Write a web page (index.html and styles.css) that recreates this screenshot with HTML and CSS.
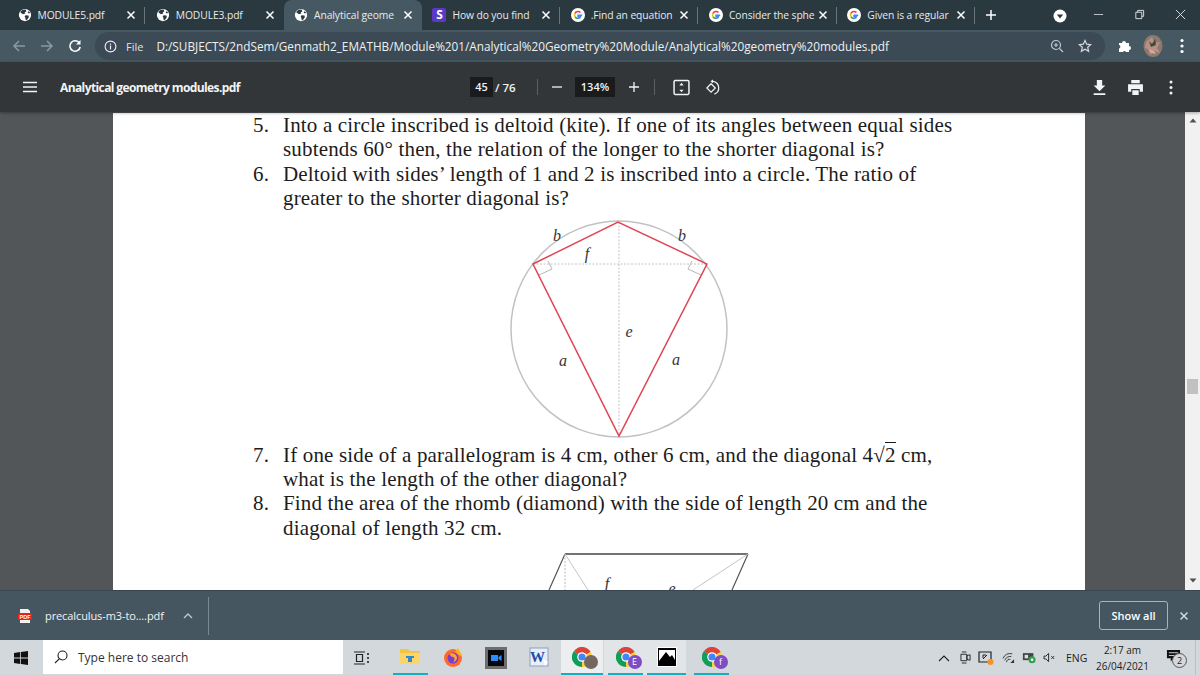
FILE: index.html
```html
<!DOCTYPE html>
<html lang="en">
<head>
<meta charset="utf-8">
<title>Analytical geometry modules.pdf</title>
<link rel="stylesheet" href="styles.css">
</head>
<body>
<svg class="defs" width="0" height="0">
  <symbol id="globe" viewBox="0 0 16 16">
    <circle cx="8" cy="8" r="7" fill="#fff"/>
    <path d="M5 2.200 8.600 1.600 9.600 3.600 7.600 5 8.400 6.400 5.600 7 3.400 5.400 2.400 4.600ZM8.600 8.200 12 8.600 12.400 10.600 10.400 13.400 8.800 14 8.400 11 7.600 9.600ZM12 3.600 14 5.400 12.400 6.200 11 5Z" fill="#2b3a42"/>
  </symbol>
  <symbol id="g" viewBox="0 0 16 16">
    <circle cx="8" cy="8" r="8" fill="#fff"/>
    <path d="M12.800 8.200H8.100v1.700h2.800c-.3 1.300-1.400 2.100-2.800 2.100" fill="none" stroke="#4285f4" stroke-width="1.700"/>
    <path d="M8.100 12A4 4 0 0 1 4.500 9.800" fill="none" stroke="#34a853" stroke-width="1.800"/>
    <path d="M4.500 9.800a4 4 0 0 1 0-3.600" fill="none" stroke="#fbbc05" stroke-width="1.800"/>
    <path d="M4.500 6.200A4 4 0 0 1 10.800 5.100" fill="none" stroke="#ea4335" stroke-width="1.800"/>
  </symbol>
  <symbol id="chrome" viewBox="0 0 20 20">
    <path d="M10 10 18.700 5A10 10 0 0 0 1.800 4.200Z" fill="#db4437"/>
    <path d="M10 10 1.800 4.200A10 10 0 0 0 10 20Z" fill="#0f9d58"/>
    <path d="M10 10 10 20A10 10 0 0 0 18.700 5Z" fill="#ffcd40"/>
    <circle cx="10" cy="10" r="4.800" fill="#fff"/>
    <circle cx="10" cy="10" r="3.600" fill="#4285f4"/>
  </symbol>
  <symbol id="x" viewBox="0 0 10 10">
    <path d="M1.500 1.500 8.500 8.500M8.500 1.500 1.500 8.500" fill="none" stroke="currentColor" stroke-width="1.500"/>
  </symbol>
</svg>

<header class="tabstrip">
  <div class="tab"><svg class="favicon"><use href="#globe"/></svg><span class="tab-title">MODULE5.pdf</span><svg class="tab-x"><use href="#x"/></svg></div>
  <div class="tab tab-plain"><svg class="favicon"><use href="#globe"/></svg><span class="tab-title">MODULE3.pdf</span><svg class="tab-x"><use href="#x"/></svg></div>
  <div class="tab tab-active tab-plain"><svg class="favicon"><use href="#globe"/></svg><span class="tab-title">Analytical geome</span><svg class="tab-x"><use href="#x"/></svg></div>
  <div class="tab"><span class="s-icon">S</span><span class="tab-title">How do you find</span><svg class="tab-x"><use href="#x"/></svg></div>
  <div class="tab"><svg class="favicon"><use href="#g"/></svg><span class="tab-title">.Find an equation</span><svg class="tab-x"><use href="#x"/></svg></div>
  <div class="tab"><svg class="favicon"><use href="#g"/></svg><span class="tab-title">Consider the sphe</span><svg class="tab-x"><use href="#x"/></svg></div>
  <div class="tab"><svg class="favicon"><use href="#g"/></svg><span class="tab-title">Given is a regular</span><svg class="tab-x"><use href="#x"/></svg></div>
  <svg class="new-tab" viewBox="0 0 12 12"><path d="M6 1v10M1 6h10" stroke="#fff" stroke-width="1.500"/></svg>
  <svg class="media-btn" viewBox="0 0 14 14"><circle cx="7" cy="7" r="6.500" fill="#fff"/><path d="M3.800 5.500h6.400L7 9.500Z" fill="#2b3a42"/></svg>
  <div class="win-controls">
    <svg viewBox="0 0 12 12"><path d="M1 6h10" stroke="#c9ced2" stroke-width="1"/></svg>
    <svg viewBox="0 0 12 12"><path d="M2 3.500h6.500V10.500H2ZM4 3.500V1.500h6.500V8H8.500" fill="none" stroke="#e4e7e9"/></svg>
    <svg viewBox="0 0 12 12"><path d="M1 1 11 11M11 1 1 11" stroke="#e4e7e9"/></svg>
  </div>
</header>

<nav class="toolbar">
  <svg class="nav-btn dim" viewBox="0 0 14 14"><path d="M13 7H2M7 2 2 7l5 5" fill="none" stroke="currentColor" stroke-width="1.500"/></svg>
  <svg class="nav-btn dim" viewBox="0 0 14 14"><path d="M1 7h11M7 2l5 5-5 5" fill="none" stroke="currentColor" stroke-width="1.500"/></svg>
  <svg class="nav-btn" viewBox="0 0 14 14"><path d="M11.500 4.200A5.200 5.200 0 1 0 12.200 8" fill="none" stroke="currentColor" stroke-width="1.600"/><path d="M12.500 1v4.500H8Z" fill="currentColor"/></svg>
  <div class="omnibox">
    <svg class="info" viewBox="0 0 14 14"><circle cx="7" cy="7" r="5.800" fill="none" stroke="#eef1f2" stroke-width="1.200"/><path d="M7 6v4.200M7 3.800v1.200" stroke="#eef1f2" stroke-width="1.300"/></svg>
    <span class="scheme">File</span>
    <span class="omni-sep"></span>
    <span class="url">D:/SUBJECTS/2ndSem/Genmath2_EMATHB/Module%201/Analytical%20Geometry%20Module/Analytical%20geometry%20modules.pdf</span>
    <svg class="omni-icon zoom-icon" viewBox="0 0 14 14"><circle cx="6" cy="6" r="4.500" fill="none" stroke="#c3c9cd" stroke-width="1.200"/><path d="M9.500 9.500 13 13M6 4v4M4 6h4" stroke="#c3c9cd" stroke-width="1.200"/></svg>
    <svg class="omni-icon" viewBox="0 0 14 14"><path d="M7 1.500 8.700 5.200l4 .4-3 2.700.9 4L7 10.300l-3.600 2 .9-4-3-2.700 4-.4Z" fill="none" stroke="#d7dbde" stroke-width="1.200"/></svg>
  </div>
  <svg class="puzzle" viewBox="0 0 14 14"><path d="M1 4h3a2 2 0 1 1 4 0h3v3a2 2 0 1 1 0 4v2H8a1.600 1.600 0 0 0-3 0H1V9.500a1.800 1.800 0 0 0 0-3.500Z" fill="#fff"/></svg>
  <svg class="avatar" viewBox="0 0 20 22"><ellipse cx="10" cy="11" rx="9.500" ry="11" fill="#8d7a6c"/><path d="M3 7 9 2l3 6 5-1-3 6 3 5-6-2-4 4-2-6-3-1Z" fill="#b98f86"/><path d="M6 6l3 3 3-5 1 6-5 2Z" fill="#3e4a3c"/><path d="M6 14l5 2 2 3-5-1Z" fill="#c9b0a4"/></svg>
  <svg class="kebab" viewBox="0 0 4 16"><circle cx="2" cy="2.500" r="1.600" fill="#fff"/><circle cx="2" cy="8" r="1.600" fill="#fff"/><circle cx="2" cy="13.500" r="1.600" fill="#fff"/></svg>
</nav>

<div class="pdfbar">
  <svg class="hamburger" viewBox="0 0 14 12"><path d="M0 1.500h14M0 6h14M0 10.500h14" stroke="#f1f3f4" stroke-width="1.300"/></svg>
  <span class="pdf-title">Analytical geometry modules.pdf</span>
  <span class="num-box page-box">45</span>
  <span class="page-total">/ 76</span>
  <span class="bar-sep sep-a"></span>
  <svg class="zoom-step minus" viewBox="0 0 12 12"><path d="M1 6h10" stroke="#f1f3f4" stroke-width="1.300"/></svg>
  <span class="num-box pct-box">134%</span>
  <svg class="zoom-step plus" viewBox="0 0 12 12"><path d="M6 1v10M1 6h10" stroke="#f1f3f4" stroke-width="1.300"/></svg>
  <span class="bar-sep sep-b"></span>
  <svg class="pdf-tool fit" viewBox="0 0 16 16"><rect x="1" y="1.500" width="14" height="13" rx="1" fill="none" stroke="#f1f3f4" stroke-width="1.400"/><path d="M8 3.500 10 6H6ZM8 12.500 6 10h4Z" fill="#f1f3f4"/></svg>
  <svg class="pdf-tool rotate" viewBox="0 0 18 18"><path d="M9 4.500 13.500 9 9 13.500 4.500 9Z" fill="none" stroke="#f1f3f4" stroke-width="1.300" transform="translate(-1.500 .5)"/><path d="M9.500 2.500a7 7 0 0 1 1.500 13.500" fill="none" stroke="#f1f3f4" stroke-width="1.300"/><path d="M9.500 .5v4L6.800 2.500Z" fill="#f1f3f4"/></svg>
  <svg class="pdf-tool download" viewBox="0 0 14 16"><path d="M4.500 1h5v5h3L7 11.500 1.500 6h3ZM1.500 13.500h11v1.500h-11Z" fill="#f1f3f4"/></svg>
  <svg class="pdf-tool print" viewBox="0 0 16 16"><path d="M4 1h8v3H4ZM1 5h14v7h-3v-2.500H4V12H1ZM5 10.500h6V15H5Z" fill="#f1f3f4"/></svg>
  <svg class="pdf-tool pdf-kebab" viewBox="0 0 4 16"><circle cx="2" cy="2.500" r="1.500" fill="#f1f3f4"/><circle cx="2" cy="8" r="1.500" fill="#f1f3f4"/><circle cx="2" cy="13.500" r="1.500" fill="#f1f3f4"/></svg>
</div>

<main class="viewer">
  <div class="viewer-main">
    <article class="page">
      <div class="problem"><span class="num">5.</span><div>Into a circle inscribed is deltoid (kite). If one of its angles between equal sides<br>subtends 60° then, the relation of the longer to the shorter diagonal is?</div></div>
      <div class="problem"><span class="num">6.</span><div>Deltoid with sides’ length of 1 and 2 is inscribed into a circle. The ratio of<br>greater to the shorter diagonal is?</div></div>
      <svg class="figure kite" viewBox="490 210 280 232">
        <circle cx="619" cy="328" r="108" fill="none" stroke="#c2c2c2" stroke-width="1.500"/>
        <path d="M533 263H707M619 221V435" stroke="#c4c4c4" stroke-dasharray="2 1.500" fill="none"/>
        <path d="M539 274 552 268 548 260M701 274 688 268 692 260" fill="none" stroke="#b8b8b8"/>
        <path d="M533 263 618 221 707 263 619 435Z" fill="none" stroke="#e04654" stroke-width="1.500"/>
        <g class="fig-label">
          <text x="557" y="240">b</text><text x="682" y="240">b</text>
          <text x="587" y="258">f</text><text x="629" y="336">e</text>
          <text x="563" y="365">a</text><text x="676" y="364">a</text>
        </g>
      </svg>
      <div class="problem"><span class="num">7.</span><div>If one side of a parallelogram is 4 cm, other 6 cm, and the diagonal 4<span class="radical">√<span class="radicand">2</span></span> cm,<br>what is the length of the other diagonal?</div></div>
      <div class="problem"><span class="num">8.</span><div>Find the area of the rhomb (diamond) with the side of length 20 cm and the<br>diagonal of length 32 cm.</div></div>
      <svg class="figure para" viewBox="500 545 300 45">
        <path d="M565 554H748" stroke="#444" stroke-width="1.500"/>
        <path d="M565 554 549 590M748 554 732 590" stroke="#555" stroke-width="1.200" fill="none"/>
        <path d="M565 554V590" stroke="#bbb" stroke-dasharray="2 1.500"/>
        <path d="M565 554 588 590M748 554 693 590" stroke="#c4c4c4"/>
        <g class="fig-label"><text x="607" y="589">f</text><text x="672" y="594">e</text></g>
      </svg>
    </article>
  </div>
  <div class="scrollbar">
    <svg class="arrow" viewBox="0 0 8 5"><path d="M4 .5 7.500 4.500H.5Z" fill="#505050"/></svg>
    <div class="thumb"></div>
    <svg class="arrow" viewBox="0 0 8 5"><path d="M4 4.500 .5 .5H7.500Z" fill="#505050"/></svg>
  </div>
</main>

<section class="downloads">
  <svg class="pdf-file" viewBox="0 0 16 16"><path d="M3 1h8l2 2v12H3Z" fill="#f1f1f1"/><rect x="1" y="5" width="14" height="7" fill="#e2231a"/><text x="8" y="10.800" class="pdf-file-text">PDF</text></svg>
  <span class="dl-name">precalculus-m3-to....pdf</span>
  <svg class="dl-chev" viewBox="0 0 10 6"><path d="M1 5 5 1l4 4" fill="none" stroke="#c0c7cb" stroke-width="1.400"/></svg>
  <span class="dl-sep"></span>
  <button class="show-all">Show all</button>
  <svg class="dl-close"><use href="#x"/></svg>
</section>

<footer class="taskbar">
  <svg class="start" viewBox="0 0 14 14"><path d="M0 2 6.200 1.100V6.500H0ZM7 1 14 0V6.500H7ZM0 7.500H6.200V12.900L0 12ZM7 7.500H14V14L7 13Z" fill="#111"/></svg>
  <div class="search">
    <svg class="search-icon" viewBox="0 0 14 14"><circle cx="8.500" cy="5.500" r="4.500" fill="none" stroke="#222" stroke-width="1.100"/><path d="M5.200 8.800 1 13" stroke="#222" stroke-width="1.100"/></svg>
    <span>Type here to search</span>
  </div>
  <svg class="taskview" viewBox="0 0 16 14"><path d="M0 1h11M0 13h11M2.500 3.500h6v7h-6Z" fill="none" stroke="#222" stroke-width="1.200"/><path d="M14 2v2M14 6v2M14 10v2" stroke="#222" stroke-width="1.600"/></svg>
  <div class="task-item w-explorer running"><svg class="task-icon" viewBox="0 0 20 18"><path d="M0 2h8l2 2h10v13H0Z" fill="#f6c445"/><path d="M0 6h20v11H0Z" fill="#fbd56a"/><path d="M6 9h8v2h-2v4H8v-4H6Z" fill="#2a8bd0"/></svg></div>
  <div class="task-item w-fox"><svg class="task-icon" viewBox="0 0 20 20"><circle cx="10" cy="11" r="9" fill="#ff6a2c"/><path d="M15 1c1 3 4 5 4 9L12 5Z" fill="#ffb320"/><circle cx="10" cy="11" r="5.500" fill="#7a3bd1"/><path d="M6 7c3-2 8 0 8 4 0 2-2 4-4 4 3-2 1-6-1-5Z" fill="#ffa436"/></svg></div>
  <div class="task-item w-zoom"><svg class="task-icon zoomapp" viewBox="0 0 22 22"><rect width="22" height="22" fill="#6d6d6d"/><rect x="3" y="3" width="16" height="16" fill="#05070c"/><path d="M6 8h7v6H6ZM13.500 10l3-2v6l-3-2Z" fill="#2f8cff"/></svg></div>
  <div class="task-item w-word"><svg class="task-icon" viewBox="0 0 20 20"><rect x="1" y="1" width="18" height="18" fill="#e9eef6" stroke="#8aa0c4"/><text x="8.500" y="14.500" class="word-w">W</text><path d="M14 12l5 3-3 4Z" fill="#fff"/></svg></div>
  <div class="task-item w-c1 running active"><svg class="task-icon" viewBox="0 0 20 20"><use href="#chrome"/></svg><span class="badge badge-photo"></span></div>
  <div class="task-item w-c2 running hover"><svg class="task-icon" viewBox="0 0 20 20"><use href="#chrome"/></svg><span class="badge badge-purple">E</span></div>
  <div class="task-item w-photo running hover"><svg class="task-icon" viewBox="0 0 20 20"><rect width="20" height="20" fill="#fff"/><rect x="1" y="1" width="18" height="18" fill="#000"/><path d="M2 3h16v10l-3-5-2 2-4-5-7 9Z" fill="#fff"/></svg></div>
  <div class="task-item w-c3 running"><svg class="task-icon" viewBox="0 0 20 20"><use href="#chrome"/></svg><span class="badge badge-purple">f</span></div>
  <div class="tray">
    <svg class="tray-icon caret" viewBox="0 0 12 8"><path d="M1 7 6 2l5 5" fill="none" stroke="#222" stroke-width="1.100"/></svg>
    <svg class="tray-icon meet" viewBox="0 0 12 16"><path d="M1 4.500h6.500v7H1ZM7.500 6 11 5v6l-3.500-1ZM2 2h5M2 14h5" fill="none" stroke="#222"/></svg>
    <svg class="tray-icon capture" viewBox="0 0 16 16"><path d="M1 2h12v10H1Z" fill="none" stroke="#222" stroke-width="1.200"/><path d="M5 9 9 5M5 5h3M5 5v3" stroke="#222"/><circle cx="12.500" cy="12" r="3" fill="#f7931e"/></svg>
    <svg class="tray-icon wifi" viewBox="0 0 14 14"><path d="M1 8a9 9 0 0 1 10-5M3 10a6 6 0 0 1 7-4M5 12a3 3 0 0 1 4-3" fill="none" stroke="#333"/><path d="M9 13h4V9Z" fill="#333"/></svg>
    <svg class="tray-icon battery" viewBox="0 0 16 14"><rect x="1" y="2" width="12" height="8" fill="#444"/><rect x="3" y="4" width="4" height="4" fill="#ddd"/><circle cx="11.500" cy="9.500" r="4" fill="#2da44e"/><circle cx="11.500" cy="9.500" r="1.500" fill="#fff"/></svg>
    <svg class="tray-icon sound" viewBox="0 0 14 12"><path d="M1 4.500h2L6 1.500v9L3 7.500H1Z" fill="none" stroke="#222"/><path d="M9 4.500l3 3M12 4.500l-3 3" stroke="#222"/></svg>
    <span class="lang">ENG</span>
    <div class="clock"><span>2:17 am</span><span>26/04/2021</span></div>
    <div class="notif">
      <svg class="notif-icon" viewBox="0 0 16 15"><path d="M1 1h14v9H8l-3 3.500V10H1Z" fill="#111"/><path d="M3 4h10M3 7h10" stroke="#d4d8dc"/></svg>
      <span class="notif-count">2</span>
    </div>
  </div>
  <div class="desk-peek"></div>
</footer>
</body>
</html>
```

FILE: styles.css
```css
* { box-sizing: border-box; }
html, body { margin: 0; padding: 0; }
body {
  width: 1200px;
  height: 675px;
  overflow: hidden;
  display: flex;
  flex-direction: column;
  font-family: "Open Sans", "Noto Sans", sans-serif;
  background: #525659;
}
svg { display: block; flex: none; }
.defs { position: absolute; }

/* Tab strip */
.tabstrip {
  height: 30px;
  flex: none;
  display: flex;
  align-items: stretch;
  padding-left: 7px;
  background: #2a3840;
  color: #eef1f2;
}
.tab {
  width: 138.300px;
  flex: none;
  display: flex;
  align-items: center;
  padding: 0 9px 0 10.500px;
  position: relative;
  font-size: 10.300px;
  letter-spacing: -.1px;
  white-space: nowrap;
}
.tab::after {
  content: "";
  position: absolute;
  right: 0;
  top: 7px;
  bottom: 6px;
  width: 1px;
  background: #66757d;
}
.tab-plain::after { display: none; }
.tab-active {
  background: #465963;
  border-radius: 8px 8px 0 0;
}
.favicon { width: 14px; height: 14px; margin-right: 6px; }
.s-icon {
  width: 14px;
  height: 14px;
  margin-right: 6px;
  flex: none;
  background: #5b39c6;
  color: #fff;
  font-weight: 700;
  font-size: 12px;
  line-height: 14px;
  text-align: center;
  border-radius: 2px;
}
.tab-title {
  flex: 1;
  min-width: 0;
  color: #e8ebec;
}
.tab-x { width: 10px; height: 10px; color: #fff; margin-left: 2px; }
.new-tab { width: 12px; height: 12px; margin: 9px 0 0 10px; }
.media-btn { width: 14px; height: 14px; margin: 9px 0 0 56px; }
.win-controls {
  margin-left: auto;
  display: flex;
  align-items: flex-start;
  gap: 30px;
  padding: 9px 14px 0 0;
}
.win-controls svg { width: 11px; height: 11px; }

/* Address toolbar */
.toolbar {
  height: 32px;
  flex: none;
  display: flex;
  align-items: center;
  padding-left: 12px;
  background: #465963;
  color: #fff;
}
.nav-btn { width: 14px; height: 14px; margin-right: 14px; }
.nav-btn.dim { color: #8b99a1; }
.omnibox {
  width: 1010px;
  height: 28px;
  margin-left: -1px;
  border-radius: 14px;
  background: #3b4a54;
  display: flex;
  align-items: center;
  padding-left: 9px;
  color: #eef1f2;
  font-size: 11.770px;
  white-space: nowrap;
}
.info { width: 13px; height: 13px; margin-right: 9px; }
.scheme { width: 20px; color: #dfe3e5; font-size: 11px; }
.omni-sep { width: 1px; height: 16px; background: #8b99a1; margin: 0 10px 0 3px; }
.url { flex: none; width: 774px; }
.omni-icon { width: 14px; height: 14px; margin-right: 14px; }
.zoom-icon { margin-left: 120px; }
.puzzle { width: 14px; height: 14px; margin-left: 13px; }
.avatar { width: 20px; height: 22px; margin-left: 11px; }
.kebab { width: 4px; height: 16px; margin-left: 17px; }

/* PDF toolbar */
.pdfbar {
  height: 50px;
  flex: none;
  display: flex;
  align-items: center;
  padding-left: 23px;
  background: #323639;
  color: #f1f3f4;
  box-shadow: 0 1px 3px rgba(0, 0, 0, .35);
  position: relative;
  z-index: 1;
}
.hamburger { width: 14px; height: 12px; }
.pdf-title {
  width: 250px;
  margin-left: 23px;
  font-size: 12px;
  font-weight: 700;
  letter-spacing: -.6px;
  white-space: nowrap;
}
.num-box {
  height: 20px;
  background: #191b1c;
  font-size: 11px;
  font-weight: 600;
  line-height: 20px;
  text-align: center;
}
.page-box { width: 23px; margin-left: 160px; }
.page-total { width: 33px; margin-left: 2px; font-size: 11.500px; font-weight: 600; white-space: nowrap; }
.bar-sep { width: 1px; height: 16px; background: #5c6063; }
.sep-a { margin-left: 9px; }
.zoom-step { width: 12px; height: 12px; }
.minus { margin-left: 13px; }
.pct-box { width: 40px; margin-left: 12px; }
.plus { margin-left: 13px; }
.sep-b { margin-left: 14px; }
.pdf-tool { height: 17px; }
.fit { width: 17px; margin-left: 18px; }
.rotate { width: 17px; margin-left: 14px; }
.download { width: 15px; margin-left: 371px; }
.print { width: 17px; margin-left: 20px; }
.pdf-kebab { width: 4px; margin-left: 25px; }

/* Document viewer */
.viewer {
  height: 478px;
  flex: none;
  display: flex;
  overflow: hidden;
}
.viewer-main {
  flex: 1;
  padding: 1px 0 0 113px;
  background: #525659;
}
.page {
  width: 972px;
  height: 500px;
  background: #fff;
  padding: 0 0 0 140px;
  font-family: "Liberation Serif", "Times New Roman", serif;
  font-size: 21px;
  letter-spacing: .16px;
  line-height: 24.400px;
  color: #1c1c1c;
  overflow: hidden;
}
.problem { display: flex; white-space: nowrap; }
.num { width: 30px; flex: none; }
.radical { position: relative; }
.radicand { border-top: 1px solid #1c1c1c; }
.kite { width: 280px; height: 232px; margin: 0 0 0 237px; }
.para { width: 300px; height: 45px; margin: 5px 0 0 247px; }
.fig-label text {
  font-family: "Liberation Serif", serif;
  font-style: italic;
  font-size: 16px;
  letter-spacing: 0;
  fill: #333;
  text-anchor: middle;
}
.scrollbar {
  width: 15px;
  flex: none;
  background: #f1f1f1;
  display: flex;
  flex-direction: column;
  align-items: center;
  padding: 6px 0 7px;
  justify-content: space-between;
  position: relative;
}
.arrow { width: 8px; height: 5px; }
.thumb {
  position: absolute;
  left: 2px;
  top: 267px;
  width: 11px;
  height: 15px;
  background: #c1c1c1;
}

/* Download shelf */
.downloads {
  height: 50px;
  flex: none;
  display: flex;
  align-items: center;
  padding-left: 17px;
  background: #455660;
  border-top: 1px solid #37454d;
  color: #f1f3f4;
}
.pdf-file { width: 16px; height: 16px; }
.pdf-file-text {
  font-family: "Liberation Sans", sans-serif;
  font-size: 5.500px;
  font-weight: 700;
  fill: #fff;
  text-anchor: middle;
}
.dl-name { width: 122px; margin-left: 12px; font-size: 11px; letter-spacing: -.1px; white-space: nowrap; }
.dl-chev { width: 10px; height: 6px; margin-left: 16px; }
.dl-sep { width: 1px; height: 38px; background: #7b888f; margin-left: 15px; }
.show-all {
  width: 69px;
  height: 29px;
  margin-left: auto;
  border: 1px solid #aab3b8;
  border-radius: 3px;
  background: transparent;
  color: #fff;
  font-family: inherit;
  font-size: 11px;
  font-weight: 600;
  padding: 0;
}
.dl-close { width: 10px; height: 10px; margin: 0 11px; color: #d3d8db; }

/* Windows taskbar */
.taskbar {
  height: 35px;
  flex: none;
  display: flex;
  align-items: stretch;
  background: #d3d8dc;
  color: #222;
}
.start { width: 14px; height: 14px; margin: 11px 15px 0 14px; }
.search {
  width: 300px;
  height: 34px;
  background: #fff;
  display: flex;
  align-items: center;
  padding-left: 11px;
  font-size: 12px;
  color: #333;
}
.search-icon { width: 14px; height: 14px; margin-right: 10px; }
.taskview { width: 16px; height: 14px; margin: 11px 0 0 11px; }
.task-item {
  flex: none;
  display: flex;
  justify-content: center;
  align-items: flex-start;
  padding-top: 7px;
  height: 35px;
  position: relative;
}
.running::after {
  content: "";
  position: absolute;
  left: 0;
  right: 0;
  bottom: 0;
  height: 2px;
  background: #0fb3c0;
}
.active { background: #eceef0; }
.hover { background: #e2e5e8; }
.task-icon { width: 20px; height: 20px; }
.w-explorer { width: 35px; margin-left: 23px; justify-content: flex-end; }
.w-explorer .task-icon { margin-right: 8px; height: 18px; }
.w-fox { width: 40px; margin-left: 5px; }
.w-zoom { width: 40px; margin-left: 3px; }
.zoomapp { width: 22px; height: 22px; }
.w-word { width: 40px; margin-left: 3px; }
.word-w {
  font-family: "Liberation Serif", serif;
  font-weight: 700;
  font-size: 15px;
  fill: #1f4fa8;
  text-anchor: middle;
}
.w-c1 { width: 42px; margin-left: 2px; }
.w-c2 { width: 43px; margin-left: 1px; }
.w-c2::after { left: 4px; right: 4px; }
.w-photo { width: 39px; }
.w-c3 { width: 35px; margin-left: 8px; }
.badge {
  position: absolute;
  left: 50%;
  top: 15px;
  margin-left: 2px;
  width: 14px;
  height: 14px;
  border-radius: 50%;
  font-size: 9px;
  line-height: 14px;
  text-align: center;
  color: #fff;
}
.badge-purple { background: #7e4cc4; }
.badge-photo { background: #75675f; }
.tray {
  margin-left: auto;
  display: flex;
  align-items: center;
  padding-right: 11px;
}
.tray-icon { height: 14px; }
.caret { width: 12px; margin-right: 10px; height: 8px; }
.meet { width: 11px; height: 15px; margin-right: 7px; }
.capture { width: 16px; height: 16px; margin-right: 8px; }
.wifi { width: 13px; height: 13px; margin-right: 7px; }
.battery { width: 14px; height: 13px; margin-right: 7px; }
.sound { width: 13px; height: 11px; margin-right: 10px; }
.lang { font-size: 10.500px; width: 20px; margin-right: 8px; white-space: nowrap; }
.clock {
  width: 57px;
  display: flex;
  flex-direction: column;
  align-items: center;
  font-size: 10px;
  line-height: 16px;
  white-space: nowrap;
}
.notif { position: relative; width: 18px; height: 18px; margin-left: 15px; }
.notif-icon { width: 15px; height: 14px; }
.notif-count {
  position: absolute;
  left: 6px;
  top: 4px;
  width: 15px;
  height: 15px;
  border: 1px solid #555;
  border-radius: 50%;
  background: #d3d8dc;
  font-size: 9px;
  line-height: 13px;
  text-align: center;
}
.desk-peek { width: 5px; border-left: 1px solid #bbc0c4; }
```
